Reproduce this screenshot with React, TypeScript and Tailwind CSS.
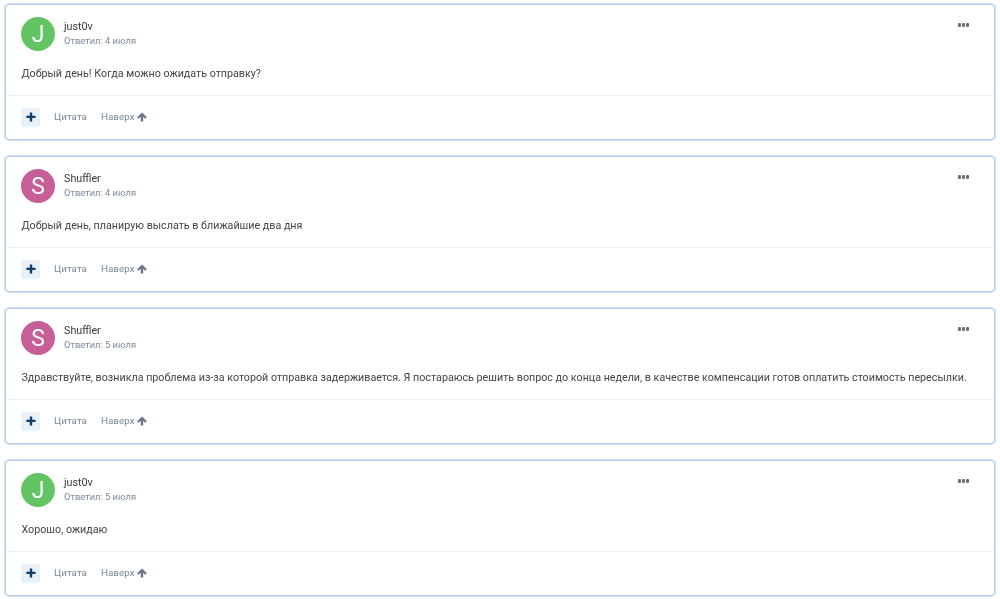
const posts = [
  { name: "just0v", letter: "J", color: "bg-[#62c462]", date: "4 июля", text: "Добрый день! Когда можно ожидать отправку?" },
  { name: "Shuffler", letter: "S", color: "bg-[#c85e98]", date: "4 июля", text: "Добрый день, планирую выслать в ближайшие два дня" },
  { name: "Shuffler", letter: "S", color: "bg-[#c85e98]", date: "5 июля", text: "Здравствуйте, возникла проблема из-за которой отправка задерживается. Я постараюсь решить вопрос до конца недели, в качестве компенсации готов оплатить стоимость пересылки." },
  { name: "just0v", letter: "J", color: "bg-[#62c462]", date: "5 июля", text: "Хорошо, ожидаю" },
];

function PostCard({ post }: { post: (typeof posts)[number] }) {
  return (
    <div className="h-[136px] bg-white rounded-[4px] border border-[#b8cde6] shadow-[0_0_0_1px_#d3e0f0] flex flex-col">
      <div className="h-[90px] px-[15px] pt-[12px] relative">
        <div className="flex items-center gap-[9px]">
          <div className={`w-[34px] h-[34px] rounded-full ${post.color} flex items-center justify-center text-white text-[23px] leading-none`}>
            {post.letter}
          </div>
          <div className="-mt-[1px]">
            <div className="text-[10.75px] leading-[14px] text-[#353c41]">{post.name}</div>
            <div className="text-[9.35px] leading-[14px] text-[#7b8a9e]">Ответил: {post.date}</div>
          </div>
        </div>
        <div className="mt-[14px] ml-[0.5px] text-[10.73px] leading-[18px] text-[#3f464c] whitespace-nowrap">{post.text}</div>
        <div className="absolute right-[25px] top-[18px] flex gap-[0.5px]">
          <span className="w-[3.5px] h-[3.5px] rounded-[1px] bg-[#68707c]" />
          <span className="w-[3.5px] h-[3.5px] rounded-[1px] bg-[#68707c]" />
          <span className="w-[3.5px] h-[3.5px] rounded-[1px] bg-[#68707c]" />
        </div>
      </div>
      <div className="flex-1 border-t border-[#eef0f3] px-[15px] flex items-center text-[9.9px] text-[#7b8a9e]">
        <div className="w-[19px] h-[19px] rounded-[3px] bg-[#e8f1f9] flex items-center justify-center">
          <svg className="-mt-[1px]" width="10" height="10" viewBox="0 0 9 9" fill="#123f68">
            <path d="M3.4 0.4h2.2v2.9h3v2.2h-3v3H3.4v-3h-3V3.3h3z" />
          </svg>
        </div>
        <span className="ml-[14px]">Цитата</span>
        <span className="ml-[14px]">Наверх</span>
        <svg className="ml-[2px] -mt-[1px]" width="10" height="10" viewBox="0 0 10 10" fill="#68788c">
          <path d="M5 0.4L9.9 5.3 8.4 6.8 6.2 4.7V9.6H3.8V4.7L1.6 6.8 0.1 5.3z" />
        </svg>
      </div>
    </div>
  );
}

export default function App() {
  return (
    <div className="w-[1000px] h-[599px] overflow-hidden bg-white px-[5px] pt-[4px] flex flex-col gap-[16px] blur-[0.35px] font-['Roboto','Liberation_Sans',sans-serif]">
      {posts.map((p, i) => (
        <PostCard key={i} post={p} />
      ))}
    </div>
  );
}
